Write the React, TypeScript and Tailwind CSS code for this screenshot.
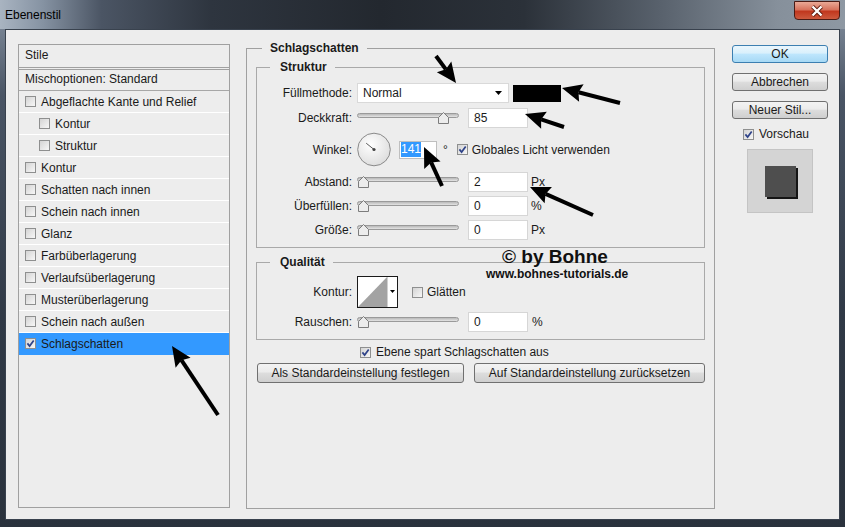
import React from 'react';

const layerStyles = [
  { label: 'Abgeflachte Kante und Relief' },
  { label: 'Kontur', sub: true },
  { label: 'Struktur', sub: true },
  { label: 'Kontur' },
  { label: 'Schatten nach innen' },
  { label: 'Schein nach innen' },
  { label: 'Glanz' },
  { label: 'Farbüberlagerung' },
  { label: 'Verlaufsüberlagerung' },
  { label: 'Musterüberlagerung' },
  { label: 'Schein nach außen' },
  { label: 'Schlagschatten', checked: true, active: true },
];

const arrows = [
  { x1: 436, y1: 56, x2: 456, y2: 83 },
  { x1: 620, y1: 103, x2: 562, y2: 88 },
  { x1: 564, y1: 127, x2: 525, y2: 114 },
  { x1: 442, y1: 186, x2: 424, y2: 147 },
  { x1: 593, y1: 215, x2: 530, y2: 187 },
  { x1: 218, y1: 415, x2: 172, y2: 346 },
];

function Checkbox({ checked = false }: { checked?: boolean }) {
  return (
    <span className="flex h-[11px] w-[11px] shrink-0 items-center justify-center border border-[#8e8f8f] bg-white">
      <span className="flex h-[9px] w-[9px] items-center justify-center bg-gradient-to-br from-[#d4d4d4] to-[#f7f7f7]">
        {checked && (
          <svg width="9" height="9" viewBox="0 0 9 9">
            <path d="M1.4 4.4 L3.6 7.1 L7.7 1.4" fill="none" stroke="#2f4389" strokeWidth="1.7" />
          </svg>
        )}
      </span>
    </span>
  );
}

function Slider({ thumb }: { thumb: string }) {
  return (
    <div className="relative ml-[5px] h-[20px] w-[102px] shrink-0">
      <div className="absolute inset-x-0 top-[5px] h-[5px] rounded-full border border-[#9a9a9a] bg-gradient-to-b from-[#b9b9b9] to-[#e4e4e4]" />
      <svg className={`absolute top-[4px] ${thumb}`} width="11" height="12" viewBox="0 0 11 12">
        <path d="M5.5 0.5 L10.5 5.5 V11.5 H0.5 V5.5 Z" fill="#ececec" stroke="#7c7c7c" />
      </svg>
    </div>
  );
}

function NumField({ value }: { value: string }) {
  return (
    <div className="ml-[9px] flex h-[20px] w-[60px] shrink-0 items-center border border-[#d6d6d6] bg-white pl-[5px]">
      {value}
    </div>
  );
}

function Label({ children }: { children: React.ReactNode }) {
  return <span className="w-[95px] shrink-0 text-right">{children}</span>;
}

function Button({ children, width }: { children: React.ReactNode; width: string }) {
  return (
    <div
      className={`flex h-[20px] items-center justify-center rounded-[3px] border border-[#707070] bg-[linear-gradient(180deg,#f3f3f3_0%,#ebebeb_45%,#dddddd_50%,#cfcfcf_100%)] ${width}`}
    >
      {children}
    </div>
  );
}

function Arrow({ x1, y1, x2, y2 }: { x1: number; y1: number; x2: number; y2: number }) {
  const len = Math.hypot(x2 - x1, y2 - y1);
  const ux = (x2 - x1) / len;
  const uy = (y2 - y1) / len;
  const hl = 20;
  const hw = 9;
  const bx = x2 - ux * hl;
  const by = y2 - uy * hl;
  const nx = bx + ux * 3;
  const ny = by + uy * 3;
  const pts = `${x2},${y2} ${bx - uy * hw},${by + ux * hw} ${nx},${ny} ${bx + uy * hw},${by - ux * hw}`;
  return (
    <g>
      <line x1={x1} y1={y1} x2={nx} y2={ny} stroke="#000" strokeWidth="4" />
      <polygon points={pts} fill="#000" />
    </g>
  );
}

export default function App() {
  return (
    <div className="relative h-[527px] w-[845px] overflow-hidden bg-[linear-gradient(180deg,#8894a3_0%,#4a5565_18%,#303946_60%,#2a323d_100%)] font-['Liberation_Sans',Arial,sans-serif] text-[12px] leading-[14px] text-[#1a1a1a]">
      {/* title bar */}
      <div className="flex h-[29px] items-start justify-between bg-[linear-gradient(90deg,#a9b4c1_0%,#8693a3_5%,#4b5564_12%,#2e353f_25%,#23282f_45%,#2b3139_62%,#58616c_78%,#86909b_92%,#8e98a3_100%)] pl-[5px] pr-[5px]">
        <span className="mt-[8px] text-black">Ebenenstil</span>
        <div className="mt-[1px] flex h-[19px] w-[46px] items-center justify-center rounded-b-[4px] border border-[#4b1b14] bg-[linear-gradient(180deg,#eaa996_0%,#d7735d_45%,#c1371e_55%,#cc5a3e_100%)]">
          <svg width="14" height="12" viewBox="0 0 14 12">
            <path d="M2.5 1.5 L11.5 10.5 M11.5 1.5 L2.5 10.5" stroke="#5a1a0e" strokeWidth="4" />
            <path d="M2.5 1.5 L11.5 10.5 M11.5 1.5 L2.5 10.5" stroke="#ffffff" strokeWidth="2.4" />
          </svg>
        </div>
      </div>

      {/* dialog body */}
      <div className="mx-[5px] flex h-[491px] items-start border border-[#39424e] bg-[#ededed] pl-[12px]">
        {/* styles list */}
        <div className="mt-[14px] h-[464px] w-[212px] shrink-0 border border-[#a0a0a0]">
          <div className="flex h-[25px] items-center border-b-[3px] border-double border-[#a0a0a0] pb-[2px] pl-[6px]">
            Stile
          </div>
          <div className="flex h-[21px] items-center border-b border-[#a7a7a7] pb-[2px] pl-[6px]">
            Mischoptionen: Standard
          </div>
          {layerStyles.map((s, i) => (
            <div
              key={i}
              className={`flex h-[22px] items-center gap-[5px] border-b ${
                s.active ? 'border-[#3399ff] bg-[#3399ff]' : 'border-white'
              } ${s.sub ? 'pl-[20px]' : 'pl-[6px]'}`}
            >
              <Checkbox checked={s.checked} />
              <span>{s.label}</span>
            </div>
          ))}
        </div>

        {/* settings */}
        <fieldset className="ml-[16px] mt-[11px] h-[468px] w-[468px] shrink-0 border border-[#a0a0a0] px-[9px]">
          <legend className="ml-[6px] px-2 font-bold leading-[14px]">Schlagschatten</legend>

          <fieldset className="mt-[5px] border border-[#a9a9a9] pb-[7px] pt-[9px]">
            <legend className="ml-[13px] pl-[10px] pr-[8px] font-bold leading-[14px]">Struktur</legend>
            <div className="flex flex-col">
              <div className="flex h-[20px] items-center">
                <Label>Füllmethode:</Label>
                <div className="ml-[5px] flex h-[20px] w-[152px] items-center justify-between border border-[#d9d9d9] bg-white pl-[5px] pr-[6px]">
                  <span>Normal</span>
                  <svg width="7" height="4" viewBox="0 0 7 4">
                    <path d="M0 0 H7 L3.5 4 Z" fill="#000" />
                  </svg>
                </div>
                <div className="ml-[4px] h-[17px] w-[48px] bg-black" />
              </div>

              <div className="mt-[5px] flex h-[20px] items-center">
                <Label>Deckkraft:</Label>
                <Slider thumb="left-[81px]" />
                <NumField value="85" />
              </div>

              <div className="mt-[4px] flex h-[35px] items-center">
                <Label>Winkel:</Label>
                <svg className="ml-[5px] shrink-0" width="34" height="35" viewBox="0 0 34 35">
                  <defs>
                    <radialGradient id="dial" cx="0.4" cy="0.35" r="0.7">
                      <stop offset="0" stopColor="#ffffff" />
                      <stop offset="1" stopColor="#dcdcdc" />
                    </radialGradient>
                  </defs>
                  <circle cx="17" cy="17.5" r="16.3" fill="url(#dial)" stroke="#8a8a8a" />
                  <line x1="17" y1="17.5" x2="9.2" y2="11.2" stroke="#5a5a5a" strokeWidth="1" />
                  <circle cx="17" cy="17.5" r="1.6" fill="#444" />
                </svg>
                <div className="ml-[8px] flex h-[18px] w-[38px] shrink-0 items-center border border-[#bfbfbf] bg-white pl-px">
                  <span className="bg-[#3399ff] leading-[15px] text-white">141</span>
                </div>
                <span className="ml-[6px]">°</span>
                <span className="ml-[9px]">
                  <Checkbox checked />
                </span>
                <span className="ml-[4px]">Globales Licht verwenden</span>
              </div>

              <div className="mt-[5px] flex h-[20px] items-center">
                <Label>Abstand:</Label>
                <Slider thumb="left-[1px]" />
                <NumField value="2" />
                <span className="ml-[3px]">Px</span>
              </div>

              <div className="mt-[4px] flex h-[20px] items-center">
                <Label>Überfüllen:</Label>
                <Slider thumb="left-[1px]" />
                <NumField value="0" />
                <span className="ml-[3px]">%</span>
              </div>

              <div className="mt-[4px] flex h-[20px] items-center">
                <Label>Größe:</Label>
                <Slider thumb="left-[1px]" />
                <NumField value="0" />
                <span className="ml-[3px]">Px</span>
              </div>
            </div>
          </fieldset>

          <fieldset className="mt-[7px] border border-[#a9a9a9] pb-[7px] pt-[7px]">
            <legend className="ml-[13px] pl-[10px] pr-[8px] font-bold leading-[14px]">Qualität</legend>
            <div className="flex flex-col">
              <div className="flex h-[32px] items-center">
                <Label>Kontur:</Label>
                <svg className="ml-[5px] shrink-0" width="41" height="32" viewBox="0 0 41 32">
                  <rect x="0.5" y="0.5" width="40" height="31" fill="#fff" stroke="#1a1a1a" />
                  <polygon points="1,31 30,1 30,31" fill="#a3a3a3" />
                  <line x1="30.5" y1="1" x2="30.5" y2="31" stroke="#d0d0d0" />
                  <path d="M33 14 H38 L35.5 17 Z" fill="#000" />
                </svg>
                <span className="ml-[14px]">
                  <Checkbox />
                </span>
                <span className="ml-[4px]">Glätten</span>
              </div>
              <div className="mt-[4px] flex h-[20px] items-center">
                <Label>Rauschen:</Label>
                <Slider thumb="left-[1px]" />
                <NumField value="0" />
                <span className="ml-[4px]">%</span>
              </div>
            </div>
          </fieldset>

          <div className="mt-[5px] flex h-[14px] items-center gap-[5px] pl-[104px]">
            <Checkbox checked />
            <span>Ebene spart Schlagschatten aus</span>
          </div>

          <div className="mt-[4px] flex gap-[10px] pl-px">
            <Button width="w-[207px]">Als Standardeinstellung festlegen</Button>
            <Button width="w-[231px]">Auf Standardeinstellung zurücksetzen</Button>
          </div>
        </fieldset>

        {/* buttons and preview */}
        <div className="ml-[17px] mt-[15px] flex w-[96px] shrink-0 flex-col">
          <div className="flex h-[18px] items-center justify-center rounded-[3px] border border-[#3c7fb1] bg-[linear-gradient(180deg,#eaf6fd_0%,#d9f0fc_45%,#bee6fd_50%,#a7d9f5_100%)]">
            OK
          </div>
          <div className="mt-[10px] flex h-[18px] items-center justify-center rounded-[3px] border border-[#707070] bg-[linear-gradient(180deg,#f3f3f3_0%,#ebebeb_45%,#dddddd_50%,#cfcfcf_100%)]">
            Abbrechen
          </div>
          <div className="mt-[10px] flex h-[18px] items-center justify-center rounded-[3px] border border-[#707070] bg-[linear-gradient(180deg,#f3f3f3_0%,#ebebeb_45%,#dddddd_50%,#cfcfcf_100%)]">
            Neuer Stil...
          </div>
          <div className="mt-[8px] flex h-[14px] items-center gap-[5px] pl-[11px]">
            <Checkbox checked />
            <span>Vorschau</span>
          </div>
          <div className="ml-[15px] mt-[8px] flex h-[64px] w-[66px] items-center justify-center border border-[#c4c4c4] bg-[#d4d4d4]">
            <div className="h-[31px] w-[31px] bg-[#4e4e4e] shadow-[2px_2px_0_#151515]" />
          </div>
        </div>
      </div>

      {/* watermark */}
      <div className="absolute left-[502px] top-[247px] text-[19px] font-bold leading-[20px] text-[#111]">© by Bohne</div>
      <div className="absolute left-[486px] top-[267px] text-[12px] font-bold leading-[14px] text-[#111]">
        www.bohnes-tutorials.de
      </div>

      {/* annotation arrows */}
      <svg className="pointer-events-none absolute inset-0" width="845" height="527" viewBox="0 0 845 527">
        {arrows.map((a, i) => (
          <Arrow key={i} {...a} />
        ))}
      </svg>
    </div>
  );
}
